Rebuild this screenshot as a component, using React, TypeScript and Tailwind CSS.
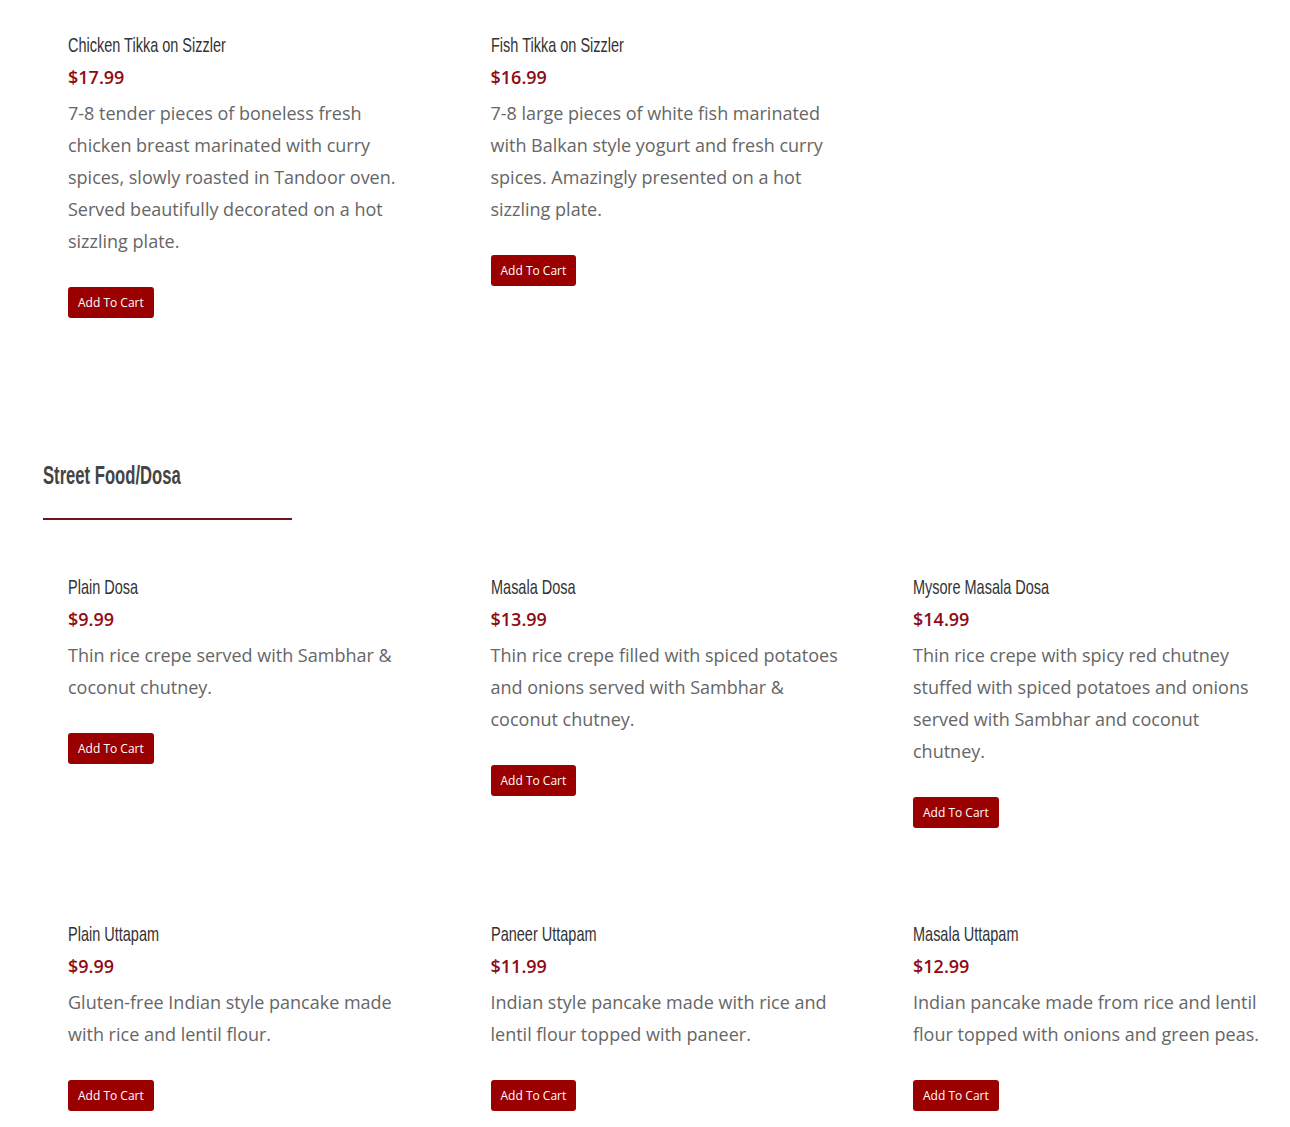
import React from "react";

type Item = {
  name: string;
  price: string;
  desc: string;
};

const sizzlers: Item[] = [
  {
    name: "Chicken Tikka on Sizzler",
    price: "$17.99",
    desc: "7-8 tender pieces of boneless fresh chicken breast marinated with curry spices, slowly roasted in Tandoor oven. Served beautifully decorated on a hot sizzling plate.",
  },
  {
    name: "Fish Tikka on Sizzler",
    price: "$16.99",
    desc: "7-8 large pieces of white fish marinated with Balkan style yogurt and fresh curry spices. Amazingly presented on a hot sizzling plate.",
  },
];

const dosaRow1: Item[] = [
  { name: "Plain Dosa", price: "$9.99", desc: "Thin rice crepe served with Sambhar & coconut chutney." },
  {
    name: "Masala Dosa",
    price: "$13.99",
    desc: "Thin rice crepe filled with spiced potatoes and onions served with Sambhar & coconut chutney.",
  },
  {
    name: "Mysore Masala Dosa",
    price: "$14.99",
    desc: "Thin rice crepe with spicy red chutney stuffed with spiced potatoes and onions served with Sambhar and coconut chutney.",
  },
];

const dosaRow2: Item[] = [
  { name: "Plain Uttapam", price: "$9.99", desc: "Gluten-free Indian style pancake made with rice and lentil flour." },
  { name: "Paneer Uttapam", price: "$11.99", desc: "Indian style pancake made with rice and lentil flour topped with paneer." },
  {
    name: "Masala Uttapam",
    price: "$12.99",
    desc: "Indian pancake made from rice and lentil flour topped with onions and green peas.",
  },
];

function MenuItem({ item }: { item: Item }) {
  return (
    <div className="pl-[25px]">
      {/* condensed title, stand-in for Oswald */}
      <h3 className="h-[30px] whitespace-nowrap">
        <span className="inline-block origin-left scale-x-[0.69] font-['Liberation_Sans',sans-serif] text-[21px] leading-[30px] text-[#333]">
          {item.name}
        </span>
      </h3>
      <p className="mt-[1px] font-['Open_Sans',sans-serif] font-semibold text-[18px] leading-[32px] text-[#8f0a12]">
        {item.price}
      </p>
      <p className="mt-1 max-w-[352px] font-['Open_Sans',sans-serif] text-[18px] leading-[32px] text-[#666]">
        {item.desc}
      </p>
      <button className="mt-[30px] h-[31px] px-[10px] rounded-[3px] bg-[#9b0000] font-['Open_Sans',sans-serif] text-[12px] text-white">
        Add To Cart
      </button>
    </div>
  );
}

function Row({ items }: { items: Item[] }) {
  return (
    <div className="grid grid-cols-[422.5px_422.5px_1fr] items-start">
      {items.map((it) => (
        <MenuItem key={it.name} item={it} />
      ))}
    </div>
  );
}

export default function App() {
  return (
    <div className="w-[1290px] h-[1127px] overflow-hidden bg-white pl-[43px] pt-[30px]">
      <Row items={sizzlers} />

      <section className="mt-[139px]">
        <h2 className="h-[36px] whitespace-nowrap">
          <span className="inline-block origin-left scale-x-[0.64] font-['Liberation_Sans',sans-serif] font-bold text-[26px] leading-[36px] text-[#444]">
            Street Food/Dosa
          </span>
        </h2>
        <div className="mt-[25px] w-[249px] h-[2px] bg-[#7a0f17]" />
        <div className="mt-[52px]">
          <Row items={dosaRow1} />
        </div>
        <div className="mt-[91px]">
          <Row items={dosaRow2} />
        </div>
      </section>
    </div>
  );
}
